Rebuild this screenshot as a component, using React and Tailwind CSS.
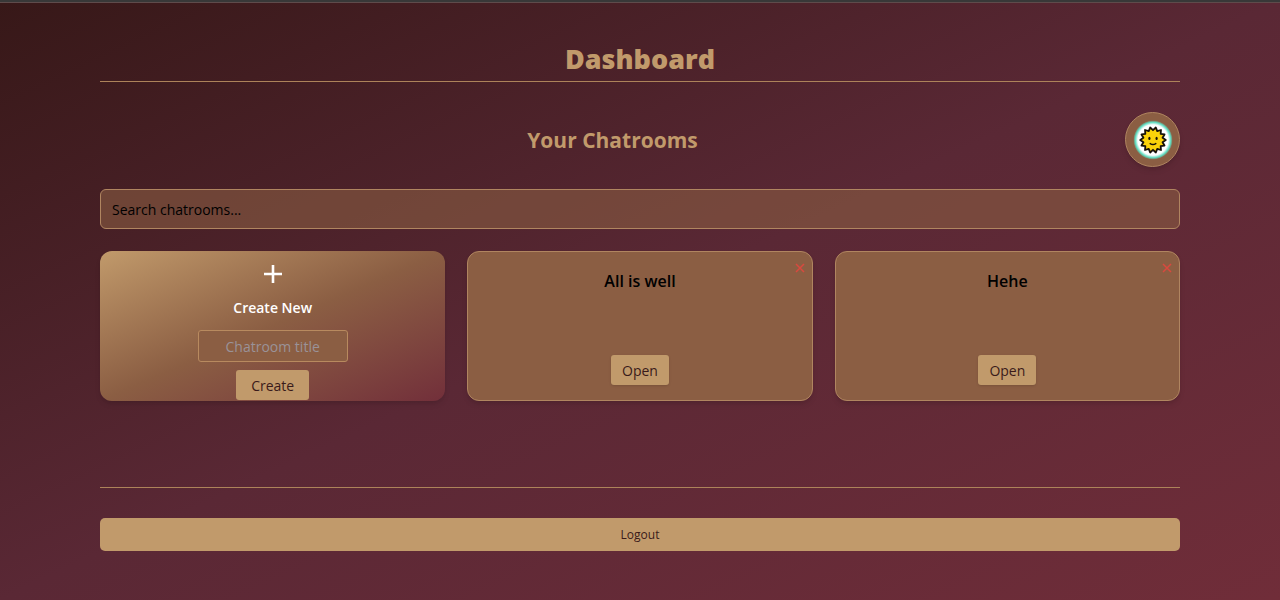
import { useState } from "react";

const rooms = ["All is well", "Hehe"];

function Sun() {
  const points = Array.from({ length: 28 }, (_, i) => {
    const r = i % 2 ? 9.8 : 12.8;
    const a = ((i + 1) * Math.PI) / 14 - Math.PI / 2;
    return `${(20 + r * Math.cos(a)).toFixed(2)},${(20 + r * Math.sin(a)).toFixed(2)}`;
  }).join(" ");
  return (
    <svg viewBox="0 0 40 40" className="size-10" aria-hidden="true">
      <defs>
        <radialGradient id="halo">
          <stop offset="0.78" stopColor="#ffffff" />
          <stop offset="0.91" stopColor="#5fdcc0" />
          <stop offset="1" stopColor="#5fdcc0" stopOpacity="0.15" />
        </radialGradient>
      </defs>
      <circle cx="20" cy="20" r="19.5" fill="url(#halo)" />
      <polygon points={points} fill="#fad20a" stroke="#17120a" strokeWidth="1.8" strokeLinejoin="round" />
      <ellipse cx="16.4" cy="18.4" rx="1.1" ry="1.7" fill="#17120a" />
      <ellipse cx="23.6" cy="18.4" rx="1.1" ry="1.7" fill="#17120a" />
      <path d="M17.2 23.6q2.8 2 5.6 0" fill="none" stroke="#17120a" strokeWidth="1.5" strokeLinecap="round" />
    </svg>
  );
}

function RoomCard({ name }) {
  return (
    <article className="relative flex h-[150px] flex-col items-center justify-between rounded-xl border border-[#b08560] bg-[#8b5e43] px-4 pt-4 pb-[15px] shadow-md">
      <button
        type="button"
        aria-label={`Delete ${name}`}
        className="absolute top-[11px] right-[7px] flex size-[10px] items-center justify-center text-[#d9493f]"
      >
        <svg viewBox="0 0 10 10" className="size-[10px]" fill="none" stroke="currentColor" strokeWidth="1.5">
          <path d="M1 1l8 8M9 1L1 9" />
        </svg>
      </button>
      <h3 className="text-[16px] leading-[26px] font-semibold text-black">{name}</h3>
      <button type="button" className="h-[30px] rounded-[3px] bg-[#c19a6b] px-[11px] text-[14px] text-[#3a1a1a] shadow-sm">
        Open
      </button>
    </article>
  );
}

export default function App() {
  const [query, setQuery] = useState("");
  const [title, setTitle] = useState("");
  const shown = rooms.filter((r) => r.toLowerCase().includes(query.toLowerCase()));

  return (
    <div className="min-h-screen border-t-2 border-[#383838] bg-linear-to-br from-[#371818] via-[#5a2835] to-[#702d39] font-['Open_Sans',sans-serif]">
      <div className="h-px bg-[#5f4b4b]" />
      <main className="px-[100px] pt-[37px] pb-12">
        <h1 className="border-b border-[#ad835a] pb-1 text-center text-[27px] leading-[37px] font-extrabold text-[#c19a6b]">
          Dashboard
        </h1>

        <header className="mt-[30px] flex items-center">
          <h2 className="flex-1 text-center text-[21px] leading-7 font-bold text-[#c19a6b]">Your Chatrooms</h2>
          <button
            type="button"
            aria-label="Profile"
            className="flex size-[55px] items-center justify-center rounded-full border border-[#b08560] bg-[#8b5e43] shadow-md"
          >
            <Sun />
          </button>
        </header>

        <input
          type="search"
          aria-label="Search chatrooms"
          placeholder="Search chatrooms..."
          value={query}
          onChange={(e) => setQuery(e.target.value)}
          className="mt-[22px] block h-10 w-full rounded-md border border-[#b08560] bg-[#8b5e43]/60 px-[11px] text-[14px] text-black placeholder:text-black"
        />

        <section className="mt-[22px] grid grid-cols-3 gap-[22px]">
          <form
            onSubmit={(e) => e.preventDefault()}
            className="flex h-[150px] flex-col items-center rounded-xl bg-linear-to-br from-[#c19a6b] via-[#8b5e43] to-[#722f3a] pt-[14px] text-white shadow-md"
          >
            <svg viewBox="0 0 18 18" className="size-[18px]" stroke="currentColor" strokeWidth="2.6" aria-hidden="true">
              <path d="M9 0v18M0 9h18" />
            </svg>
            <h3 className="mt-[14px] text-[14px] leading-[22px] font-semibold">Create New</h3>
            <input
              type="text"
              aria-label="Chatroom title"
              placeholder="Chatroom title"
              value={title}
              onChange={(e) => setTitle(e.target.value)}
              className="mt-[11px] h-8 w-[150px] rounded-[3px] border border-[#b88a5f] bg-[#8b5e43] text-center text-[14px] placeholder:text-[#9a9298]"
            />
            <button type="submit" className="mt-2 h-[30px] rounded-[3px] bg-[#c19a6b] px-[15px] text-[14px] text-[#3a1a1a]">
              Create
            </button>
          </form>
          {shown.map((name) => (
            <RoomCard key={name} name={name} />
          ))}
        </section>

        <footer className="mt-[86px] border-t border-[#ad835a] pt-[30px]">
          <button type="button" className="h-[33px] w-full rounded-[5px] bg-[#c19a6b] text-[12px] text-[#3a1a1a]">
            Logout
          </button>
        </footer>
      </main>
    </div>
  );
}
